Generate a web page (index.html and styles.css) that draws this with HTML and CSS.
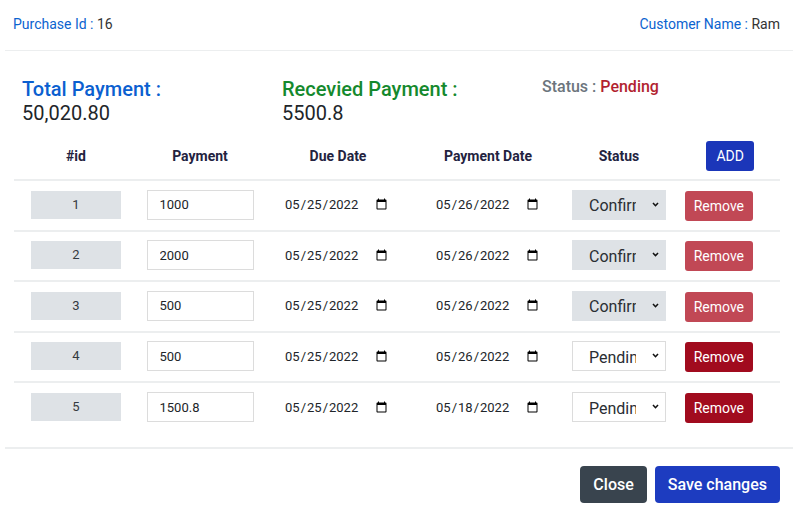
FILE: index.html
```html
<!DOCTYPE html>
<html lang="en">
<head>
<meta charset="utf-8">
<link rel="stylesheet" href="styles.css">
</head>
<body>
<div class="modal">
  <div class="modal-header">
    <div><span class="lbl">Purchase Id :</span> 16</div>
    <div><span class="lbl">Customer Name :</span> Ram</div>
  </div>
  <div class="modal-body">
    <div class="summary">
      <div class="sum-item">
        <div class="sum-label total">Total Payment :</div>
        <div class="sum-value">50,020.80</div>
      </div>
      <div class="sum-item">
        <div class="sum-label received">Recevied Payment :</div>
        <div class="sum-value">5500.8</div>
      </div>
      <div class="status">Status : <span class="pending">Pending</span></div>
    </div>

    <div class="table">
      <div class="row head">
        <div class="cell c">#id</div>
        <div class="cell c">Payment</div>
        <div class="cell c">Due Date</div>
        <div class="cell c">Payment Date</div>
        <div class="cell c">Status</div>
        <div class="cell e"><button class="btn add">ADD</button></div>
      </div>

      <div class="row">
        <div class="cell c"><div class="idbox">1</div></div>
        <div class="cell c"><input class="pay" type="text" value="1000"></div>
        <div class="cell s"><input class="date" type="date" value="2022-05-25"></div>
        <div class="cell s2"><input class="date" type="date" value="2022-05-26"></div>
        <div class="cell c"><select class="sel confirmed"><option>Confirmed</option><option>Pending</option></select></div>
        <div class="cell e"><button class="btn remove disabled">Remove</button></div>
      </div>

      <div class="row">
        <div class="cell c"><div class="idbox">2</div></div>
        <div class="cell c"><input class="pay" type="text" value="2000"></div>
        <div class="cell s"><input class="date" type="date" value="2022-05-25"></div>
        <div class="cell s2"><input class="date" type="date" value="2022-05-26"></div>
        <div class="cell c"><select class="sel confirmed"><option>Confirmed</option><option>Pending</option></select></div>
        <div class="cell e"><button class="btn remove disabled">Remove</button></div>
      </div>

      <div class="row">
        <div class="cell c"><div class="idbox">3</div></div>
        <div class="cell c"><input class="pay" type="text" value="500"></div>
        <div class="cell s"><input class="date" type="date" value="2022-05-25"></div>
        <div class="cell s2"><input class="date" type="date" value="2022-05-26"></div>
        <div class="cell c"><select class="sel confirmed"><option>Confirmed</option><option>Pending</option></select></div>
        <div class="cell e"><button class="btn remove disabled">Remove</button></div>
      </div>

      <div class="row">
        <div class="cell c"><div class="idbox">4</div></div>
        <div class="cell c"><input class="pay" type="text" value="500"></div>
        <div class="cell s"><input class="date" type="date" value="2022-05-25"></div>
        <div class="cell s2"><input class="date" type="date" value="2022-05-26"></div>
        <div class="cell c"><select class="sel"><option>Pending</option><option>Confirmed</option></select></div>
        <div class="cell e"><button class="btn remove">Remove</button></div>
      </div>

      <div class="row last">
        <div class="cell c"><div class="idbox">5</div></div>
        <div class="cell c"><input class="pay" type="text" value="1500.8"></div>
        <div class="cell s"><input class="date" type="date" value="2022-05-25"></div>
        <div class="cell s2"><input class="date" type="date" value="2022-05-18"></div>
        <div class="cell c"><select class="sel"><option>Pending</option><option>Confirmed</option></select></div>
        <div class="cell e"><button class="btn remove">Remove</button></div>
      </div>
    </div>
  </div>
  <div class="modal-footer">
    <button class="btn close">Close</button>
    <button class="btn save">Save changes</button>
  </div>
</div>
</body>
</html>
```

FILE: styles.css
```css
* { box-sizing: border-box; }
html, body { margin: 0; background: #fff; }
body {
  font-family: Roboto, "Liberation Sans", sans-serif;
  color: #212529;
}
.modal {
  width: 788px;
  margin-left: 5px;
}
.modal-header {
  display: flex;
  justify-content: space-between;
  height: 51px;
  padding: 15px 13px 0 8px;
  font-size: 14px;
  line-height: 18px;
  color: #333;
  border-bottom: 1px solid #eceeef;
}
.lbl { color: #0b63cf; }

.modal-body {
  padding: 26px 13px 15px 9px;
}
.summary {
  display: grid;
  grid-template-columns: 260px 260px auto;
  padding-left: 8px;
}
.sum-label {
  font-size: 20px;
  font-weight: 500;
  line-height: 24px;
}
.total { color: #0b5fd0; }
.received { color: #14892d; }
.sum-value {
  font-size: 20px;
  line-height: 24px;
  color: #212529;
}
.status {
  font-size: 16px;
  font-weight: 500;
  line-height: 18px;
  padding-top: 1px;
  color: #6c757d;
}
.pending { color: #b21f30; }

.table { margin-top: 7px; }
.row {
  display: grid;
  grid-template-columns: 124px 124px 152px 148px 114px 104px;
  height: 50.5px;
  padding-bottom: 1px;
  border-bottom: 2px solid #eceeef;
  align-items: center;
}
.row.head {
  height: 49px;
  padding-bottom: 0;
  font-size: 14px;
  font-weight: 700;
  color: #23233f;
}
.row.last { border-bottom: none; height: 49px; }
.cell { display: flex; align-items: center; }
.cell.c { justify-content: center; }
.cell.s { justify-content: flex-start; padding-left: 21px; }
.cell.s2 { justify-content: flex-start; padding-left: 20px; }
.cell.e { justify-content: flex-end; padding-right: 27px; }

.idbox {
  width: 90px;
  height: 28px;
  background: #dee2e6;
  font-size: 13px;
  line-height: 28px;
  text-align: center;
  color: #343a40;
}
.pay {
  width: 107px;
  height: 30px;
  border: 1px solid #dcdcdc;
  padding: 0 12px;
  font-family: Roboto, "Liberation Sans", sans-serif;
  font-size: 13px;
  color: #212529;
  outline: none;
}
.date {
  width: 108px;
  border: none;
  padding: 0 1px;
  font-family: Roboto, "Liberation Sans", sans-serif;
  font-size: 13px;
  color: #212529;
  background: transparent;
}
.sel {
  -webkit-appearance: none;
  appearance: none;
  width: 94px;
  height: 30px;
  border: 1px solid #dcdcdc;
  background-color: #fff;
  background-image: url("data:image/svg+xml,%3Csvg xmlns='http://www.w3.org/2000/svg' width='8' height='6' viewBox='0 0 8 6'%3E%3Cpath d='M1 1.2 L4 4.4 L7 1.2' fill='none' stroke='%23111' stroke-width='1.9'/%3E%3C/svg%3E");
  background-repeat: no-repeat;
  background-position: right 6px top 11px;
  background-size: 7px 5px;
  padding: 2px 29px 0 16px;
  font-family: Roboto, "Liberation Sans", sans-serif;
  font-size: 16px;
  color: #2a2e33;
  border-radius: 0;
  text-overflow: clip;
  white-space: nowrap;
  overflow: hidden;
}
.sel.confirmed {
  background-color: #dee2e6;
  border-color: #dee2e6;
}

.btn {
  font-family: Roboto, "Liberation Sans", sans-serif;
  border: none;
  color: #fff;
  cursor: pointer;
}
.add {
  height: 30px;
  padding: 0 10px;
  margin-right: -1px;
  font-size: 14px;
  font-weight: 400;
  background: #1b36b9;
  border-radius: 3px;
}
.remove {
  height: 30px;
  padding: 0 9px;
  margin-top: 2px;
  font-size: 14px;
  background: #a10b1e;
  border-radius: 3px;
}
.remove.disabled { background: #c14855; }

.modal-footer {
  display: flex;
  justify-content: flex-end;
  gap: 8px;
  border-top: 2px solid #eceeef;
  padding: 17px 13px 0 0;
}
.close, .save {
  height: 37px;
  font-size: 16px;
  font-weight: 500;
  border-radius: 4px;
}
.close { background: #39444e; padding: 0 13px; }
.save { background: #1d3cc0; padding: 0 13px; }
```
